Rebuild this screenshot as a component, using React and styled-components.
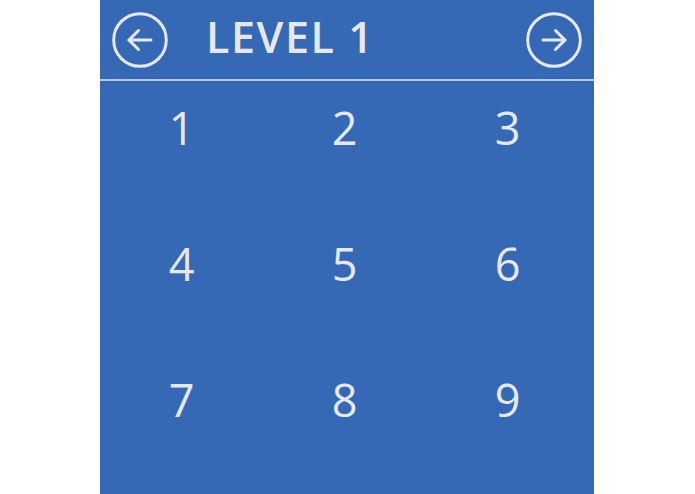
import React from 'react';
import styled, { createGlobalStyle } from 'styled-components';

const GlobalStyle = createGlobalStyle`
  html, body {
    margin: 0;
    padding: 0;
    background: #ffffff;
    font-family: "Open Sans", "Noto Sans", sans-serif;
  }
`;

const Page = styled.div`
  display: flex;
  justify-content: center;
  height: 494px;
  overflow: hidden;
`;

const Panel = styled.section`
  width: 494px;
  margin-left: -1px;
  background-color: #3569b6;
  color: #e6e8ec;
  display: flex;
  flex-direction: column;
`;

const Header = styled.header`
  display: flex;
  align-items: center;
  height: 81px;
  padding: 0 12px 0 12px;
  box-sizing: border-box;
  border-bottom: 2px solid #b6cbea;
`;

const NavButton = styled.button`
  width: 56px;
  height: 56px;
  padding: 0;
  border: none;
  background: none;
  color: inherit;
  cursor: pointer;
  display: flex;
  svg {
    display: block;
  }
`;

const Title = styled.h1`
  margin: 0 0 6px 38px;
  flex: 1;
  font-size: 43px;
  font-weight: 600;
  letter-spacing: 1.6px;
  line-height: 1;
`;

const Grid = styled.div`
  display: grid;
  grid-template-columns: repeat(3, 1fr);
  grid-auto-rows: 136px;
  padding-right: 5px;
`;

const Cell = styled.div`
  display: flex;
  justify-content: center;
  padding-top: 16px;
  font-size: 45px;
  line-height: 62px;
  cursor: pointer;
`;

const Arrow = ({ dir }) => (
  <svg width="56" height="56" viewBox="0 0 56 56" fill="none" stroke="currentColor" strokeWidth="3" strokeLinecap="round" strokeLinejoin="round">
    <circle cx="28" cy="28" r="26.3" />
    <path d="M17 28h22" />
    {dir === 'left' ? (
      <path d="M26.5 18.5L17 28l9.5 9.5" />
    ) : (
      <path d="M29.5 18.5L39 28l-9.5 9.5" />
    )}
  </svg>
);

const levels = [1, 2, 3, 4, 5, 6, 7, 8, 9];

export default function App() {
  return (
    <Page>
      <GlobalStyle />
      <Panel>
        <Header>
          <NavButton aria-label="Previous level">
            <Arrow dir="left" />
          </NavButton>
          <Title>LEVEL 1</Title>
          <NavButton aria-label="Next level">
            <Arrow dir="right" />
          </NavButton>
        </Header>
        <Grid>
          {levels.map(n => (
            <Cell key={n}>{n}</Cell>
          ))}
        </Grid>
      </Panel>
    </Page>
  );
}
